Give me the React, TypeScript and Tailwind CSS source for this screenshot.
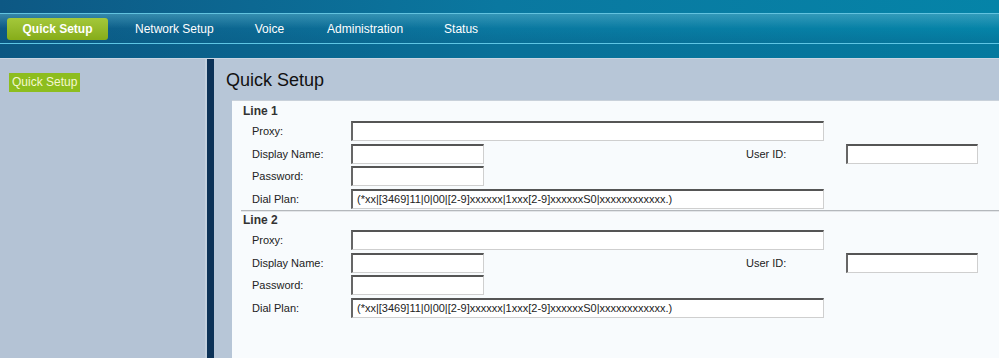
const font = { fontFamily: '"Liberation Sans", Arial, sans-serif' };

const DIAL = "(*xx|[3469]11|0|00|[2-9]xxxxxx|1xxx[2-9]xxxxxxS0|xxxxxxxxxxxx.)";

function Field({ w, value }: { w: string; value?: string }) {
  return (
    <div
      className={`${w} h-[20px] border-t-2 border-l-2 border-t-[#555] border-l-[#666] border-r border-b border-r-[#cfcfcf] border-b-[#cfcfcf] bg-white pl-[4px] text-[11px] leading-[17px] text-[#222] whitespace-nowrap overflow-hidden`}
    >
      {value}
    </div>
  );
}

function Row({ label, children }: { label: string; children: React.ReactNode }) {
  return (
    <div className="flex items-center h-[22.5px] pl-[9px]">
      <div className="w-[99px] text-[11px] text-[#222]">{label}</div>
      {children}
    </div>
  );
}

function LineBlock({ n, first }: { n: number; first?: boolean }) {
  return (
    <div className="pl-[11px]">
      <div className={`text-[12px] font-bold text-[#333] leading-[14px] pb-[2px] ${first ? "pt-[3px]" : "pt-[1px]"}`}>
        Line {n}
      </div>
      <Row label="Proxy:">
        <Field w="w-[473px]" />
      </Row>
      <Row label="Display Name:">
        <Field w="w-[133px]" />
        <div className="ml-[262px] w-[100px] text-[11px] text-[#222]">User ID:</div>
        <Field w="w-[132px]" />
      </Row>
      <Row label="Password:">
        <Field w="w-[133px]" />
      </Row>
      <Row label="Dial Plan:">
        <Field w="w-[473px]" value={DIAL} />
      </Row>
    </div>
  );
}

export default function App() {
  return (
    <div style={font} className="w-[999px] h-[358px] overflow-hidden bg-[#b7c6d7] flex flex-col">
      {/* header */}
      <div className="bg-gradient-to-r from-[#0d5884] via-[#0a78a0] to-[#0584a8]">
        <div className="h-[13px]" />
        <div className="h-px bg-[#62c3df]" />
        <div className="h-[29px] flex items-center bg-gradient-to-b from-[#5eb3cd]/50 via-transparent to-[#06577f]/30">
          <div className="ml-[7px] w-[101px] h-[22px] rounded-[3px] bg-gradient-to-b from-[#a4c83a] to-[#86ac18] flex items-center justify-center text-white font-bold text-[12px]">
            Quick Setup
          </div>
          <div className="flex text-white text-[12px]">
            <span className="ml-[27px]">Network Setup</span>
            <span className="ml-[41px]">Voice</span>
            <span className="ml-[43px]">Administration</span>
            <span className="ml-[41px]">Status</span>
          </div>
        </div>
        <div className="h-px bg-[#5ec6e4]" />
        <div className="h-[14px] bg-[#06577f]/20" />
      </div>
      <div className="h-px bg-[#c9d5e2]" />
      {/* body */}
      <div className="flex flex-1">
        <div className="w-[205px] bg-[#b4c3d5] pl-[9px] pt-[10px]">
          <div className="inline-block bg-[#8dbd1e] text-[#f4f7d0] text-[12px] px-[3px] leading-[19px]">Quick Setup</div>
        </div>
        <div className="w-[2px] bg-[#c2cfdd]" />
        <div className="w-[7px] bg-[#0c3257]" />
        <div className="flex-1 flex flex-col">
          <div className="h-[41px] pl-[12px] pt-[10px] text-[18px] text-[#111] leading-[22px]">Quick Setup</div>
          <div className="ml-[18px] flex-1 bg-[#f8fbfd] border-t border-[#c9d1da]">
            <LineBlock n={1} first />
            <div className="ml-[9px] h-[2px] border-t border-[#b4b8bc] border-b border-b-[#e3e6e9]" />
            <LineBlock n={2} />
          </div>
        </div>
      </div>
    </div>
  );
}
